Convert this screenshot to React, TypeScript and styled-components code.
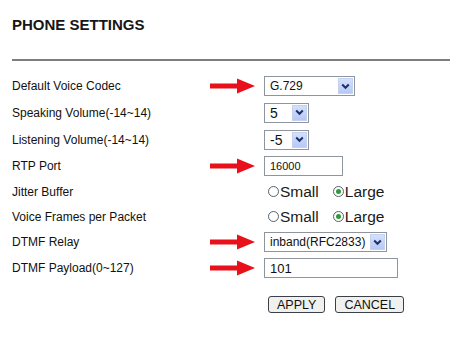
import styled, { createGlobalStyle } from 'styled-components'

const GlobalStyle = createGlobalStyle`
  html, body {
    margin: 0;
    padding: 0;
    background: #ffffff;
  }
  body {
    font-family: "Liberation Sans", Arial, sans-serif;
    color: #111;
  }
`

type Row = {
  label: string
  arrow?: boolean
  control: React.ReactNode
}

function Arrow() {
  return (
    <svg width="45" height="16" viewBox="0 0 45 16">
      <path d="M0 5.5 H27 V0.5 L45 8 L27 15.5 V10.5 H0 Z" fill="#e8101a" />
    </svg>
  )
}

function Dropdown({ value, width, size }: { value: string; width: number; size?: number }) {
  return (
    <SelectBox $width={width}>
      <SelectText $size={size ?? 12}>{value}</SelectText>
      <SelectButton>
        <svg width="9" height="7" viewBox="0 0 9 7">
          <path d="M1.2 1.5 L4.5 4.8 L7.8 1.5" stroke="#1f2f6b" strokeWidth="2" fill="none" />
        </svg>
      </SelectButton>
    </SelectBox>
  )
}

function RadioPair({ selected }: { selected: 'Small' | 'Large' }) {
  return (
    <Radios>
      {(['Small', 'Large'] as const).map((opt) => (
        <RadioOption key={opt}>
          <RadioCircle>{opt === selected && <RadioDot />}</RadioCircle>
          {opt}
        </RadioOption>
      ))}
    </Radios>
  )
}

export default function App() {
  const rows: Row[] = [
    { label: 'Default Voice Codec', arrow: true, control: <Dropdown value="G.729" width={91} /> },
    { label: 'Speaking Volume(-14~14)', control: <Dropdown value="5" width={45} size={14} /> },
    { label: 'Listening Volume(-14~14)', control: <Dropdown value="-5" width={45} size={14} /> },
    { label: 'RTP Port', arrow: true, control: <TextField $width={79} $size={11}>16000</TextField> },
    { label: 'Jitter Buffer', control: <RadioPair selected="Large" /> },
    { label: 'Voice Frames per Packet', control: <RadioPair selected="Large" /> },
    { label: 'DTMF Relay', arrow: true, control: <Dropdown value="inband(RFC2833)" width={123} size={12} /> },
    { label: 'DTMF Payload(0~127)', arrow: true, control: <TextField $width={134} $size={13}>101</TextField> },
  ]

  return (
    <>
      <GlobalStyle />
      <Page>
        <Title>PHONE SETTINGS</Title>
        <Rule />
        <Form>
          {rows.map((row) => (
            <FormRow key={row.label}>
              <Label>{row.label}</Label>
              <ArrowCell>{row.arrow && <Arrow />}</ArrowCell>
              <ControlCell>{row.control}</ControlCell>
            </FormRow>
          ))}
        </Form>
        <Buttons>
          <Button>APPLY</Button>
          <Button>CANCEL</Button>
        </Buttons>
      </Page>
    </>
  )
}

const Page = styled.div`
  width: 450px;
  height: 339px;
  padding: 16px 0 0 12px;
  box-sizing: border-box;
  overflow: hidden;
`
const Title = styled.div`
  font-size: 15px;
  line-height: 18px;
  font-weight: 700;
  color: #161616;
`
const Rule = styled.div`
  margin-top: 25px;
  height: 2px;
  background: #7d7d7d;
`
const Form = styled.div`
  margin-top: 12px;
  display: grid;
  grid-template-columns: 198px 54px 1fr;
  grid-template-rows: 26px 27px 27px 26px 25px 25px 26px 26px;
`
const FormRow = styled.div`
  display: contents;
`
const Label = styled.div`
  font-size: 12px;
  color: #111;
  display: flex;
  align-items: center;
`
const ArrowCell = styled.div`
  display: flex;
  align-items: center;
`
const ControlCell = styled.div`
  display: flex;
  align-items: center;
`
const SelectBox = styled.div<{ $width: number }>`
  width: ${(p) => p.$width}px;
  height: 20px;
  box-sizing: border-box;
  border: 1px solid #8e959c;
  background: #fff;
  display: flex;
  align-items: center;
  justify-content: space-between;
  padding: 1px;
`
const SelectText = styled.span<{ $size: number }>`
  font-size: ${(p) => p.$size}px;
  padding-left: 4px;
  color: #111;
  white-space: nowrap;
`
const SelectButton = styled.div`
  width: 15px;
  height: 16px;
  background: linear-gradient(#d4e0fb, #b6c9f5);
  border: 1px solid #c4d1f0;
  box-sizing: border-box;
  display: flex;
  align-items: center;
  justify-content: center;
`
const TextField = styled.div<{ $width: number; $size: number }>`
  width: ${(p) => p.$width}px;
  height: 20px;
  box-sizing: border-box;
  border: 1px solid #8e959c;
  background: #fff;
  font-size: ${(p) => p.$size}px;
  padding-left: 5px;
  display: flex;
  align-items: center;
  color: #111;
`
const Radios = styled.div`
  display: flex;
  gap: 14px;
  padding-left: 4px;
`
const RadioOption = styled.label`
  display: flex;
  align-items: center;
  gap: 1px;
  font-size: 15.5px;
  color: #1a1a1a;
`
const RadioCircle = styled.span`
  width: 11px;
  height: 11px;
  box-sizing: border-box;
  border: 1px solid #556070;
  border-radius: 50%;
  background: #fff;
  display: flex;
  align-items: center;
  justify-content: center;
`
const RadioDot = styled.span`
  width: 5px;
  height: 5px;
  border-radius: 50%;
  background: #2f9a3a;
`
const Buttons = styled.div`
  margin: 15px 0 0 256px;
  display: flex;
  gap: 10px;
`
const Button = styled.button`
  height: 17px;
  padding: 0 8px;
  box-sizing: border-box;
  border: 1.5px solid #3a3f4a;
  border-radius: 3px;
  background: #f0f0ec;
  font-family: "Liberation Sans", Arial, sans-serif;
  font-size: 12.5px;
  line-height: 14px;
  color: #111;
`
